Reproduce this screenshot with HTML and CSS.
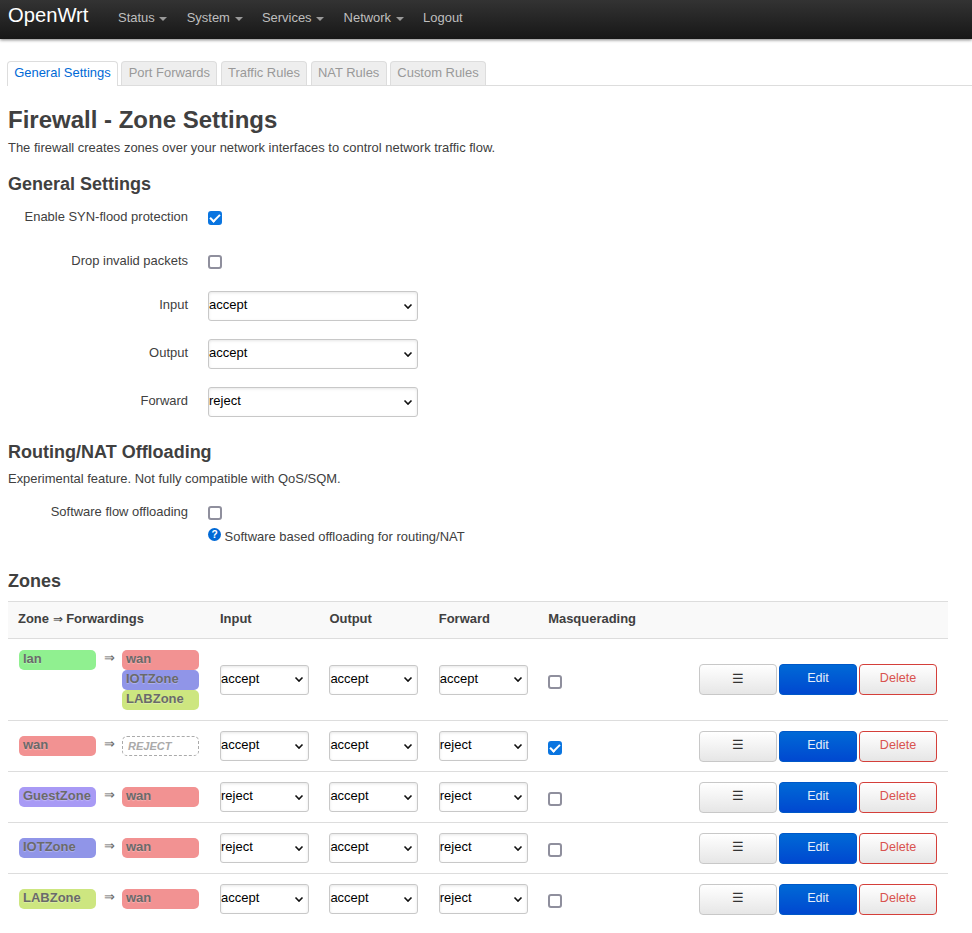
FILE: index.html
```html
<!DOCTYPE html>
<html lang="en">
<head>
  <meta charset="UTF-8">
  <title>Firewall - Zone Settings - OpenWrt</title>
  <link rel="stylesheet" href="styles.css">
</head>
<body>

  <header class="navbar">
    <a class="brand">OpenWrt</a>
    <nav class="menu">
      <a>Status <span class="caret"></span></a>
      <a>System <span class="caret"></span></a>
      <a>Services <span class="caret"></span></a>
      <a>Network <span class="caret"></span></a>
      <a>Logout</a>
    </nav>
  </header>

  <main class="container">
    <ul class="tabs">
      <li class="tab active">General Settings</li>
      <li class="tab">Port Forwards</li>
      <li class="tab">Traffic Rules</li>
      <li class="tab">NAT Rules</li>
      <li class="tab">Custom Rules</li>
    </ul>

    <h1>Firewall - Zone Settings</h1>
    <p class="desc">The firewall creates zones over your network interfaces to control network traffic flow.</p>

    <h2 class="first">General Settings</h2>
    <div class="row row-check">
      <label class="row-label">Enable SYN-flood protection</label>
      <div class="row-field"><input type="checkbox" checked></div>
    </div>
    <div class="row row-check">
      <label class="row-label">Drop invalid packets</label>
      <div class="row-field"><input type="checkbox"></div>
    </div>
    <div class="row row-select">
      <label class="row-label">Input</label>
      <div class="row-field"><select class="wide"><option>accept</option><option>reject</option><option>drop</option></select></div>
    </div>
    <div class="row row-select">
      <label class="row-label">Output</label>
      <div class="row-field"><select class="wide"><option>accept</option><option>reject</option><option>drop</option></select></div>
    </div>
    <div class="row row-select">
      <label class="row-label">Forward</label>
      <div class="row-field"><select class="wide"><option>reject</option><option>accept</option><option>drop</option></select></div>
    </div>

    <h2 class="offload">Routing/NAT Offloading</h2>
    <p class="desc desc-offload">Experimental feature. Not fully compatible with QoS/SQM.</p>
    <div class="row row-offload">
      <label class="row-label">Software flow offloading</label>
      <div class="row-field">
        <input type="checkbox">
        <div class="help">
          <svg class="help-icon" viewBox="0 0 14 14" width="13" height="13"><circle cx="7" cy="7" r="7" fill="#0069d6"/><text x="7" y="11" text-anchor="middle" class="help-mark">?</text></svg>
          Software based offloading for routing/NAT
        </div>
      </div>
    </div>

    <h2 class="zones-title">Zones</h2>
    <table class="zones">
      <colgroup>
        <col class="col-zone"><col class="col-policy"><col class="col-policy"><col class="col-policy"><col class="col-masq"><col>
      </colgroup>
      <thead>
        <tr>
          <th>Zone <span class="th-arrow">⇒</span> Forwardings</th>
          <th>Input</th>
          <th>Output</th>
          <th>Forward</th>
          <th>Masquerading</th>
          <th></th>
        </tr>
      </thead>
      <tbody>
        <tr class="tall">
          <td>
            <div class="fwd">
              <span class="zone green">lan</span>
              <span class="arrow">⇒</span>
              <div class="dests">
                <span class="zone red">wan</span>
                <span class="zone blue">IOTZone</span>
                <span class="zone lime">LABZone</span>
              </div>
            </div>
          </td>
          <td><select><option>accept</option><option>reject</option></select></td>
          <td><select><option>accept</option><option>reject</option></select></td>
          <td><select><option>accept</option><option>reject</option></select></td>
          <td><input type="checkbox"></td>
          <td class="actions"><button class="btn">☰</button><button class="btn edit">Edit</button><button class="btn del">Delete</button></td>
        </tr>
        <tr>
          <td>
            <div class="fwd">
              <span class="zone red">wan</span>
              <span class="arrow">⇒</span>
              <div class="dests"><span class="zone none">REJECT</span></div>
            </div>
          </td>
          <td><select><option>accept</option><option>reject</option></select></td>
          <td><select><option>accept</option><option>reject</option></select></td>
          <td><select><option>reject</option><option>accept</option></select></td>
          <td><input type="checkbox" checked></td>
          <td class="actions"><button class="btn">☰</button><button class="btn edit">Edit</button><button class="btn del">Delete</button></td>
        </tr>
        <tr>
          <td>
            <div class="fwd">
              <span class="zone purple">GuestZone</span>
              <span class="arrow">⇒</span>
              <div class="dests"><span class="zone red">wan</span></div>
            </div>
          </td>
          <td><select><option>reject</option><option>accept</option></select></td>
          <td><select><option>accept</option><option>reject</option></select></td>
          <td><select><option>reject</option><option>accept</option></select></td>
          <td><input type="checkbox"></td>
          <td class="actions"><button class="btn">☰</button><button class="btn edit">Edit</button><button class="btn del">Delete</button></td>
        </tr>
        <tr>
          <td>
            <div class="fwd">
              <span class="zone blue">IOTZone</span>
              <span class="arrow">⇒</span>
              <div class="dests"><span class="zone red">wan</span></div>
            </div>
          </td>
          <td><select><option>reject</option><option>accept</option></select></td>
          <td><select><option>accept</option><option>reject</option></select></td>
          <td><select><option>reject</option><option>accept</option></select></td>
          <td><input type="checkbox"></td>
          <td class="actions"><button class="btn">☰</button><button class="btn edit">Edit</button><button class="btn del">Delete</button></td>
        </tr>
        <tr>
          <td>
            <div class="fwd">
              <span class="zone lime">LABZone</span>
              <span class="arrow">⇒</span>
              <div class="dests"><span class="zone red">wan</span></div>
            </div>
          </td>
          <td><select><option>accept</option><option>reject</option></select></td>
          <td><select><option>accept</option><option>reject</option></select></td>
          <td><select><option>reject</option><option>accept</option></select></td>
          <td><input type="checkbox"></td>
          <td class="actions"><button class="btn">☰</button><button class="btn edit">Edit</button><button class="btn del">Delete</button></td>
        </tr>
      </tbody>
    </table>
  </main>

</body>
</html>
```

FILE: styles.css
```css
body {
  margin: 0;
  font-family: "Liberation Sans", Arial, sans-serif;
  font-size: 12.96px;
  line-height: 18px;
  color: #404040;
  background-color: #fff;
}

/* top bar */
.navbar {
  display: flex;
  height: 39px;
  padding-left: 8px;
  background: linear-gradient(to bottom, #333, #171717);
  box-shadow: 0 1px 3px rgba(0, 0, 0, 0.5);
}
.brand {
  width: 90px;
  font-size: 20.2px;
  line-height: 31px;
  color: #fff;
}
.menu {
  display: flex;
  gap: 19.4px;
  padding: 9px 0 0 20px;
  color: #bfbfbf;
}
.caret {
  display: inline-block;
  margin-left: 1px;
  vertical-align: middle;
  border-top: 4px solid #999;
  border-left: 4px solid transparent;
  border-right: 4px solid transparent;
}

.container {
  padding: 22px 24px 0 8px;
}

/* tabs */
.tabs {
  display: flex;
  gap: 3.6px;
  height: 24px;
  margin: 0 -24px 0 -1px;
  padding: 0;
  list-style: none;
  border-bottom: 1px solid #ddd;
}
.tab {
  height: 23px;
  padding: 0 6.2px;
  line-height: 22px;
  color: #999;
  background: #eee;
  border: 1px solid #ddd;
  border-bottom: 0;
  border-radius: 4px 4px 0 0;
}
.tab.active {
  height: 24px;
  color: #0069d6;
  background: #fff;
}

h1 {
  margin: 19px 0 0;
  font-size: 24px;
  line-height: 30px;
}
h2 {
  margin: 0;
  font-size: 18px;
  line-height: 22px;
}
.desc {
  margin: 4px 0 0;
}
.desc-offload {
  margin-top: 7px;
}
h2.first {
  margin-top: 16px;
}
h2.offload {
  margin-top: 6px;
}
h2.zones-title {
  margin-top: 24px;
}

/* settings rows */
.row {
  display: flex;
  gap: 20px;
}
.row-label {
  width: 180px;
  line-height: 16px;
  text-align: right;
  color: #404040;
}
.row-check {
  height: 38px;
}
.row-check:first-of-type {
  height: 44px;
  margin-top: 14px;
}
.row-select {
  height: 48px;
}
.row-select .row-label {
  line-height: 28px;
}
.row-offload {
  margin-top: 16px;
}

input[type="checkbox"] {
  position: relative;
  width: 14px;
  height: 14px;
  margin: 2px 0 0;
  appearance: none;
  background: #fff;
  border: 2px solid #8f8f9d;
  border-radius: 3px;
}
input[type="checkbox"]:checked {
  background: #0a75e0;
  border-color: #0a75e0;
}
input[type="checkbox"]:checked::after {
  content: "";
  position: absolute;
  left: 2px;
  top: -1px;
  width: 4px;
  height: 8px;
  border: solid #fff;
  border-width: 0 2px 2px 0;
  transform: rotate(45deg);
}

select {
  width: 89px;
  height: 30px;
  padding: 0 0 3px;
  font: 13px "Liberation Sans", Arial, sans-serif;
  color: #000;
  appearance: none;
  background: #fff url("data:image/svg+xml,%3Csvg xmlns='http://www.w3.org/2000/svg' width='10' height='7'%3E%3Cpath d='M1.5 1.5l3.5 3.5 3.5-3.5' fill='none' stroke='%23111' stroke-width='1.6'/%3E%3C/svg%3E") no-repeat right 4px center;
  border: 1px solid #c8c8c8;
  border-radius: 3px;
  box-shadow: inset 0 1px 3px rgba(0, 0, 0, 0.1);
}
select.wide {
  width: 210px;
}

.help {
  margin-top: 3px;
}
.help-icon {
  vertical-align: 0;
}
.help-mark {
  font-size: 11px;
  font-weight: bold;
  fill: #fff;
}

/* zones table */
.zones {
  width: 940px;
  margin-top: 9px;
  border-collapse: collapse;
  table-layout: fixed;
}
.col-zone {
  width: 202px;
}
.col-policy {
  width: 109.4px;
}
.col-masq {
  width: 110px;
}
.zones th {
  height: 37px;
  padding: 0 10px 2px;
  box-sizing: border-box;
  text-align: left;
  background: #f9f9f9;
  border-top: 1px solid #ddd;
  border-bottom: 1px solid #ddd;
}
.th-arrow {
  font-size: 12px;
  font-weight: normal;
}
.zones td {
  height: 50px;
  padding: 0 10px;
  border-bottom: 1px solid #ddd;
}
.zones tr:last-child td {
  border-bottom: 0;
}
.zones td input[type="checkbox"] {
  margin-top: 9px;
}
.zones tr.tall td {
  height: 81px;
}

.fwd {
  display: flex;
  align-items: flex-start;
  padding-left: 1px;
}
.arrow {
  width: 26px;
  line-height: 16px;
  text-align: center;
  color: #666;
}
.dests {
  display: flex;
  flex-direction: column;
}
.zone {
  display: block;
  width: 77px;
  height: 20px;
  padding: 0 4px;
  box-sizing: border-box;
  font-size: 13px;
  font-weight: bold;
  line-height: 18px;
  color: #6a6a6a;
  border-radius: 5px;
  text-shadow: 0 1px 1px rgba(255, 255, 255, 0.3);
}
.green { background: #90f090; }
.red { background: #f29292; }
.blue { background: #9095e8; }
.purple { background: #a89af5; }
.lime { background: #cde680; }
.none {
  padding-left: 5px;
  font-size: 11px;
  font-style: italic;
  color: #aaa;
  background: transparent;
  border: 1px dashed #aaa;
}

.zones td.actions {
  padding-right: 11px;
  text-align: right;
  white-space: nowrap;
}
.btn {
  width: 78px;
  height: 31px;
  margin-left: 2px;
  padding: 0 0 3px;
  font: 12.6px "Liberation Sans", Arial, sans-serif;
  vertical-align: top;
  color: #333;
  background: linear-gradient(to bottom, #fff, #e6e6e6);
  border: 1px solid #c8c8c8;
  border-radius: 4px;
}
.btn.edit {
  color: #e6eefa;
  background: linear-gradient(to bottom, #0069d6, #0048d0);
  border-color: #0058c8;
}
.btn.del {
  color: #d9534f;
  border-color: #d43f3a;
}
```
